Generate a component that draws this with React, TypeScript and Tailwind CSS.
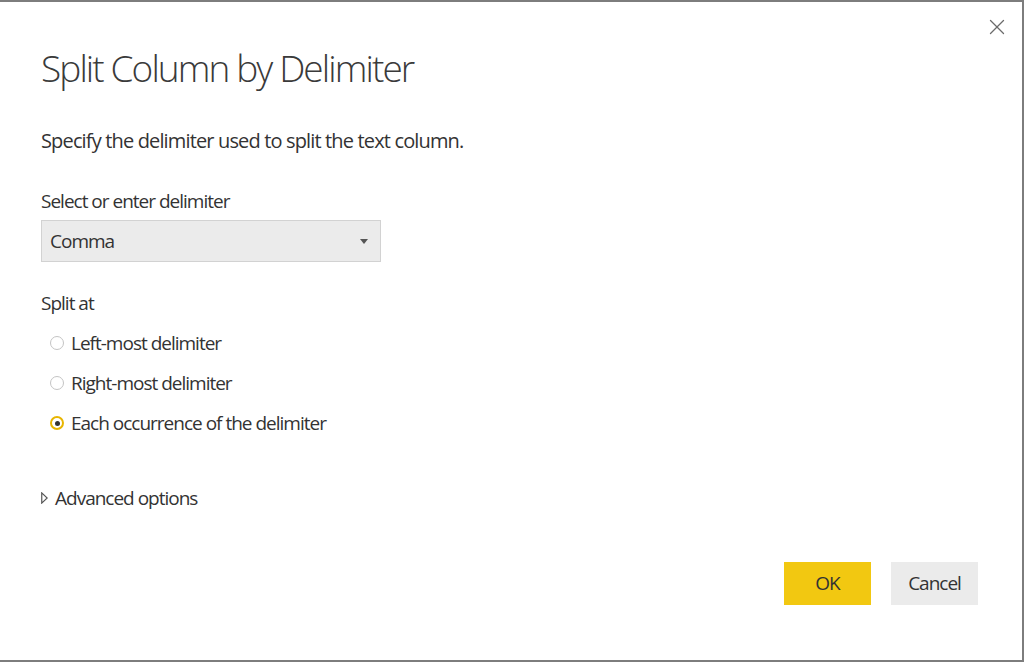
import { X } from 'lucide-react';

const font = { fontFamily: '"Open Sans", "Noto Sans", sans-serif' };

const Radio = ({ checked, label }: { checked?: boolean; label: string }) => (
  <label className="flex h-10 items-center gap-[7px] pl-[9px]">
    {checked ? (
      <span className="flex h-[14px] w-[14px] items-center justify-center rounded-full border-2 border-[#e8b500] bg-white">
        <span className="h-[5px] w-[5px] rounded-full bg-[#333]" />
      </span>
    ) : (
      <span className="h-[14px] w-[14px] rounded-full border-[1.5px] border-[#c4c4c4] bg-white" />
    )}
    <span>{label}</span>
  </label>
);

export default function App() {
  return (
    <div
      className="relative h-[662px] w-[1024px] overflow-hidden border-t-2 border-r-2 border-b-2 border-[#7d7d7d] bg-white text-[19px] tracking-[-1px] text-[#333]"
      style={font}
    >
      <button className="absolute top-[12px] right-[12px] text-[#6b6b6b]">
        <X size={26} strokeWidth={1.2} />
      </button>

      <div className="flex flex-col pl-[41px]">
        <h1 className="mt-[40px] h-[52px] text-[37px] leading-[52px] font-light tracking-[-1.9px] text-[#3a3a3a]">
          Split Column by Delimiter
        </h1>
        <p className="mt-[32px] h-[30px] text-[20px] leading-[30px] tracking-[-0.85px]">
          Specify the delimiter used to split the text column.
        </p>

        <div className="mt-[30px] h-[30px] leading-[30px]">Select or enter delimiter</div>
        <div className="mt-[4px] flex h-[42px] w-[340px] items-center justify-between border border-[#d2d2d2] bg-[#ebebeb] pr-[12px] pl-[8px]">
          <span>Comma</span>
          <span className="h-0 w-0 border-x-[4px] border-t-[5px] border-x-transparent border-t-[#555]" />
        </div>

        <div className="mt-[26px] h-[30px] leading-[30px]">Split at</div>
        <div className="mt-[5px] flex flex-col">
          <Radio label="Left-most delimiter" />
          <Radio label="Right-most delimiter" />
          <Radio checked label="Each occurrence of the delimiter" />
        </div>

        <div className="mt-[40px] flex h-[30px] items-center gap-[7px]">
          <svg width="7" height="12" viewBox="0 0 7 12" className="text-[#555]">
            <path d="M0.75 0.9 L6.2 6 L0.75 11.1 Z" fill="none" stroke="currentColor" strokeWidth="1.2" />
          </svg>
          <span>Advanced options</span>
        </div>
      </div>

      <div className="absolute right-[44px] bottom-[55px] flex gap-[20px]">
        <button className="h-[43px] w-[87px] bg-[#f2c811] text-[#333]">OK</button>
        <button className="h-[43px] w-[87px] bg-[#ebebeb] text-[#333]">Cancel</button>
      </div>
    </div>
  );
}
